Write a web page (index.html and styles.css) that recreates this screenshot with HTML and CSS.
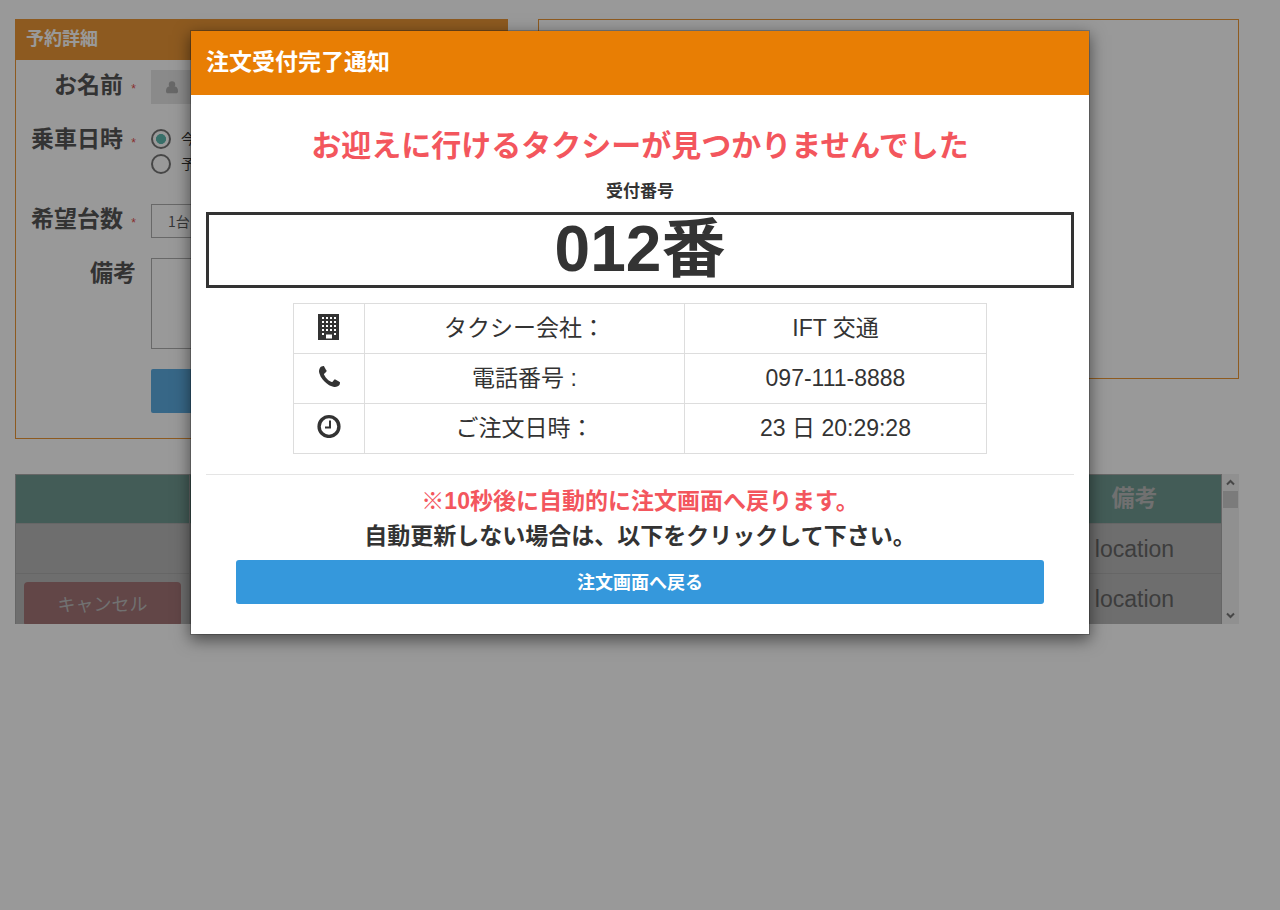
FILE: index.html
```html
<!DOCTYPE html>
<html lang="ja">
<head>
<meta charset="utf-8">
<title>注文受付完了通知</title>
<link rel="stylesheet" href="styles.css">
</head>
<body>
<div class="page">
  <div class="top-row">
    <section class="panel booking">
      <h2 class="panel-title">予約詳細</h2>
      <form class="form">
        <div class="field name-field">
          <label class="label">お名前 <span class="required">*</span></label>
          <div class="input-group"><span class="addon"><svg width="12" height="13" viewBox="0 0 12 13"><circle cx="6" cy="3.500" r="3.200"/><path d="M3 5.500h6c2.100.1 3 2.400 3 4.700 0 1.300-.8 2.100-1.900 2.100H1.900C.8 12.300 0 11.500 0 10.200 0 7.900.9 5.600 3 5.500z"/></svg></span></div>
        </div>
        <div class="field date-field">
          <label class="label">乗車日時 <span class="required">*</span></label>
          <div class="radios">
            <div class="radio"><i class="dot checked"></i>今</div>
            <div class="radio"><i class="dot"></i>予</div>
          </div>
        </div>
        <div class="field count-field">
          <label class="label">希望台数 <span class="required">*</span></label>
          <div class="select">1台</div>
        </div>
        <div class="field note-field">
          <label class="label">備考</label>
          <div class="textarea"></div>
        </div>
        <div class="submit"></div>
      </form>
    </section>
    <section class="panel side"></section>
  </div>
  <div class="orders">
    <div class="grid">
      <div class="cell head"></div><div class="cell head"></div><div class="cell head">備考</div>
      <div class="cell"></div><div class="cell"></div><div class="cell">location</div>
      <div class="cell"><div class="cancel">キャンセル</div></div><div class="cell"></div><div class="cell">location</div>
    </div>
    <div class="scrollbar">
      <svg width="9" height="7" viewBox="0 0 9 7"><path d="M1 5.500l3.500-3.500L8 5.500"/></svg>
      <div class="thumb"></div>
      <svg class="down" width="9" height="7" viewBox="0 0 9 7"><path d="M1 1.500L4.500 5 8 1.500"/></svg>
    </div>
  </div>
</div>
<div class="backdrop"></div>
<div class="modal">
  <div class="modal-header">注文受付完了通知</div>
  <div class="modal-body">
    <div class="message">お迎えに行けるタクシーが見つかりませんでした</div>
    <div class="number-label">受付番号</div>
    <div class="number">012番</div>
    <table class="info">
      <tr><td class="icon"><svg width="22" height="26" viewBox="0 0 22 26"><path fill-rule="evenodd" d="M0 0h21v26H0zM4 3v2h2V3zM8 3v2h2V3zM12 3v2h2V3zM16 3v2h2V3zM4 7v2h2V7zM8 7v2h2V7zM12 7v2h2V7zM16 7v2h2V7zM4 11v2h2v-2zM8 11v2h2v-2zM12 11v2h2v-2zM16 11v2h2v-2zM4 15v2h2v-2zM8 15v2h2v-2zM12 15v2h2v-2zM16 15v2h2v-2zM4 19v2h2v-2zM16 19v2h2v-2zM8 20.500v4h6v-4z"/></svg></td><td class="key">タクシー会社：</td><td>IFT 交通</td></tr>
      <tr><td class="icon phone"><svg width="21" height="21" viewBox="0 0 1408 1408"><path transform="translate(0 1408) scale(1 -1)" d="M1408 296q0-27-10-70.500t-21-68.500q-21-50-122-106-94-51-186-51-27 0-53 3.500t-57 12.500-47 14.500-55.500 20.500-49 18q-98 35-175 83-127 79-264 216t-216 264q-48 77-83 175-3 9-18 49t-20.500 55.500-14.500 47-12.500 57-3.500 53q0 92 51 186 56 101 106 122 25 11 68.500 21t70.500 10q14 0 21-3 18-6 53-76 11-19 30-54t35-63.500 31-53.500q3-4 17.500-25t21.500-35.500 7-28.500q0-20-28.500-50t-62-55-62-53-28.500-46q0-9 5-22.500t8.500-20.500 14-24 11.500-19q76-137 174-235t235-174q2-1 19-11.500t24-14 20.500-8.500 22.500-5q18 0 46 28.500t53 62 55 62 50 28.500q14 0 28.500-7t35.500-21.500 25-17.500q25-15 53.500-31t63.500-35 54-30q70-35 76-53 3-7 3-21z"/></svg></td><td class="key">電話番号 :</td><td>097-111-8888</td></tr>
      <tr><td class="icon"><svg width="24" height="24" viewBox="0 0 24 24"><circle cx="12" cy="12.500" r="9.900" class="stroke"/><path d="M12 6.500h2v8H8v-2h4z"/></svg></td><td class="key">ご注文日時：</td><td>23 日 20:29:28</td></tr>
    </table>
    <div class="rule"></div>
    <div class="notice red">※10秒後に自動的に注文画面へ戻ります。</div>
    <div class="notice">自動更新しない場合は、以下をクリックして下さい。</div>
    <div class="back">注文画面へ戻る</div>
  </div>
</div>
</body>
</html>
```
FILE: styles.css
```css
* { box-sizing: border-box; }
body {
  margin: 0;
  height: 910px;
  position: relative;
  overflow: hidden;
  background: #fff;
  color: #333;
  font-family: "Liberation Sans", "Noto Sans CJK JP", sans-serif;
}
svg { display: block; fill: currentColor; }

.page { padding: 19px 41px 0 15px; }
.top-row { display: flex; gap: 30px; align-items: flex-start; }
.panel { border: 1px solid #e87e04; opacity: .8; }
.booking { width: 493px; height: 420px; }
.side { width: 701px; height: 360px; }
.panel-title {
  margin: 0;
  height: 40px;
  padding-left: 10px;
  background: #e87e04;
  color: #fff;
  font-size: 18px;
  line-height: 39px;
}
.form { padding: 10px 15px 0 0; }
.field { display: flex; }
.label {
  width: 135px;
  padding-right: 15px;
  text-align: right;
  font-size: 23px;
  font-weight: bold;
  line-height: 31px;
  color: #2b2b2b;
  white-space: nowrap;
  flex: none;
}
.required { margin-left: 2px; color: #e02222; font-size: 12px; font-weight: normal; }
.name-field { height: 54px; }
.date-field { height: 80px; }
.count-field { height: 54px; }
.note-field { height: 111px; }
.input-group { flex: 1; height: 34px; background: #fff; }
.addon { width: 41px; height: 34px; background: #e0e0e0; color: #999; display: flex; align-items: center; justify-content: center; }
.radios { padding-top: 5px; font-size: 14px; color: #000; }
.radio { display: flex; align-items: center; gap: 10px; height: 20px; margin-bottom: 5px; line-height: 18px; }
.dot { width: 20px; height: 20px; border: 2px solid #555; border-radius: 50%; }
.checked { background: radial-gradient(circle, #36a89c 0 4.700px, transparent 5.300px); }
.select { flex: 1; height: 34px; padding-left: 16px; border: 1px solid #999; font: 14px/32px "Noto Sans CJK JP", sans-serif; }
.textarea { flex: 1; height: 91px; border: 1px solid #999; }
.submit { width: 300px; height: 44px; margin-left: 135px; background: #3598dc; border-radius: 2px; }

.orders { display: flex; height: 150px; margin-top: 35px; overflow: hidden; }
.grid {
  flex: none;
  width: 1207px;
  display: grid;
  grid-template-columns: 174px 1fr 174px;
  grid-template-rows: 49px 50px 51px;
  border-left: 1px solid #aaa;
  border-top: 1px solid #aaa;
  background: #b8b8b8;
}
.cell {
  border-right: 1px solid #aaa;
  border-bottom: 1px solid #aaa;
  color: #666;
  text-align: center;
  font-size: 23px;
  line-height: 50px;
}
.head { background: #709a91; color: #bbb; font-weight: bold; line-height: 47px; }
.cancel { margin: 8px 8px 0; height: 44px; border-radius: 4px; background: #a37577; color: #bdbdbd; font-size: 18px; line-height: 46px; }
.scrollbar { width: 17px; background: #f0f0f0; display: flex; flex-direction: column; align-items: center; padding: 5px 0; }
.scrollbar svg { fill: none; stroke: #777; stroke-width: 2; }
.thumb { width: 15px; height: 17px; margin-top: 5px; background: #cdcdcd; }
.down { margin-top: auto; }

.backdrop { position: absolute; inset: 0; background: rgba(0, 0, 0, .4); }
.modal {
  position: absolute;
  left: 190px;
  top: 30px;
  width: 900px;
  height: 605px;
  background: #fff;
  background-clip: padding-box;
  border: 1px solid rgba(0, 0, 0, .2);
  box-shadow: 0 5px 15px rgba(0, 0, 0, .5);
}
.modal-header { height: 64px; padding-left: 15px; background: #e87e04; color: #fff; font-size: 23px; font-weight: bold; line-height: 62px; }
.modal-body { padding: 30px 15px 0; text-align: center; }
.message { height: 51px; color: #f3565d; font-size: 30px; font-weight: bold; line-height: 42px; }
.number-label { height: 36px; font-size: 17px; font-weight: bold; line-height: 32px; }
.number { height: 76px; border: 3px solid #333; font-size: 64px; font-weight: bold; line-height: 68px; }
.info { width: 694px; height: 151px; margin: 15px auto 20px; border-collapse: collapse; table-layout: fixed; font-size: 23px; line-height: 46px; }
.info td { height: 50px; padding: 0 0 2px; border: 1px solid #ddd; }
.info .icon { width: 71px; vertical-align: top; }
.info .key { width: 320px; }
.icon svg { margin: 10px auto 0; }
.phone svg { margin-top: 12px; }
.stroke { fill: none; stroke: currentColor; stroke-width: 3.400; }
.rule { height: 1px; margin-bottom: 9px; background: #e5e5e5; }
.notice { height: 35px; font-size: 23px; font-weight: bold; line-height: 35px; }
.red { color: #f3565d; }
.back { height: 44px; margin: 6px 30px 0; border-radius: 3px; background: #3598dc; color: #fff; font-size: 18px; font-weight: bold; line-height: 46px; }
```
